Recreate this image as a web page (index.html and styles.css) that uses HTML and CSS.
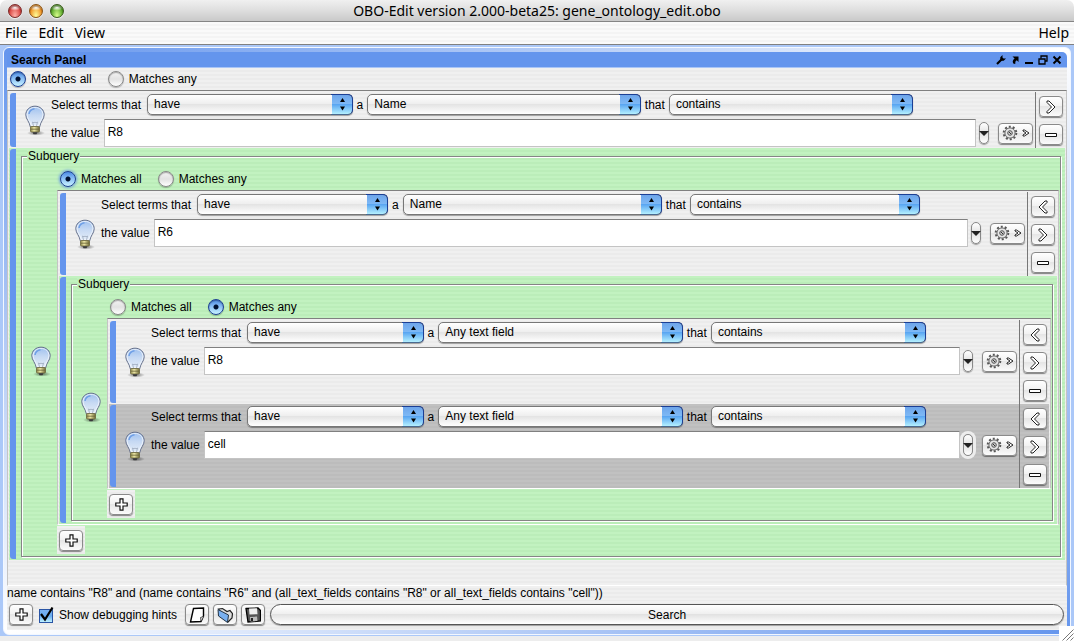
FILE: index.html
```html
<!DOCTYPE html>
<html lang="en">
<head>
<meta charset="utf-8">
<title>OBO-Edit version 2.000-beta25: gene_ontology_edit.obo</title>
<link rel="stylesheet" href="styles.css">
</head>
<body>
<svg class="defs" width="0" height="0" aria-hidden="true">
  <defs>
    <linearGradient id="glass" x1="0" y1="0" x2="0" y2="1"><stop offset="0" stop-color="#9dbfee"/><stop offset=".45" stop-color="#c6d9f3"/><stop offset="1" stop-color="#e6eef8"/></linearGradient>
    <linearGradient id="brass" x1="0" y1="0" x2="1" y2="0"><stop offset="0" stop-color="#8a8448"/><stop offset=".4" stop-color="#f0eaa8"/><stop offset="1" stop-color="#6d6836"/></linearGradient>
    <radialGradient id="shade"><stop offset="0" stop-color="#000" stop-opacity=".5"/><stop offset="1" stop-color="#000" stop-opacity="0"/></radialGradient>
  </defs>
  <symbol id="bulb" viewBox="0 0 20 31">
    <ellipse cx="11" cy="28" rx="9" ry="2.6" fill="url(#shade)"/>
    <path d="M10 1.2C4.6 1.2.8 5 .8 9.8c0 4.4 3.6 6.500 4.600 12.200h9.200c1-5.700 4.600-7.800 4.600-12.200C19.200 5 15.400 1.200 10 1.200z" fill="url(#glass)" stroke="#66708a"/>
    <path d="M10 2.400c-4.600 0-7.900 3.200-7.900 7.400 0 3.700 3 5.800 4.200 10.900h7.400c1.200-5.100 4.200-7.200 4.200-10.900 0-4.200-3.300-7.400-7.900-7.400z" fill="none" stroke="#f4f8fd" stroke-opacity=".8"/>
    <path d="M4 9c.5-3 2.500-4.800 5.500-5.200" fill="none" stroke="#6f9fe6" stroke-width="1.500"/>
    <path d="M8.500 21l-1-4 1.500.8 1-.8 1 .8 1.500-.8-1 4" fill="none" stroke="#93a0b4" stroke-width=".7"/>
    <rect x="5.500" y="21.500" width="9" height="5.500" rx="1" fill="url(#brass)" stroke="#6a6538" stroke-width=".8"/>
    <path d="M6 24.200h8" stroke="#6a6538" stroke-width=".8"/>
    <path d="M7.500 27.300h5l-1 2h-3z" fill="#3a3a3a"/>
  </symbol>
  <symbol id="gear" viewBox="0 0 16 16">
    <circle cx="8" cy="8" r="6.300" fill="none" stroke="#555" stroke-width="2" stroke-dasharray="2 1.958"/>
    <circle cx="8" cy="8" r="5.100" fill="#e6e6e6" stroke="#666"/>
    <circle cx="8" cy="8" r="2.300" fill="#ccc" stroke="#555"/>
    <path d="M7 7l2 2" stroke="#333"/>
  </symbol>
  <symbol id="chev-small" viewBox="0 0 8 8"><path d="M1 1h1.500L7 4 2.500 7H1V6l3-2-3-2z" fill="#fff" stroke="#222"/></symbol>
  <symbol id="chev-right" viewBox="0 0 12 14"><path d="M2 1h2l6 6-6 6H2v-1.500L6.500 7 2 2.500z" fill="#fff" stroke="#222"/></symbol>
  <symbol id="chev-left" viewBox="0 0 12 14"><path d="M10 1H8L2 7l6 6h2v-1.500L5.500 7 10 2.500z" fill="#fff" stroke="#222"/></symbol>
  <symbol id="minus" viewBox="0 0 12 14"><path d="M.5 5.500h11v3H.5z" fill="#fff" stroke="#111"/></symbol>
  <symbol id="plus" viewBox="0 0 13 13"><path d="M5 .8h3V5h4.200v3H8v4.200H5V8H.8V5H5z" fill="#fff" stroke="#111" stroke-width="1.200"/></symbol>
  <symbol id="updown" viewBox="0 0 7 15"><path d="M3.500 1L6 5H1zM3.500 13.500L6 9.500H1z" fill="#000"/></symbol>
</svg>

<header class="titlebar">
  <div class="lights">
    <button class="light red" aria-label="Close window"></button>
    <button class="light amber" aria-label="Minimize window"></button>
    <button class="light green" aria-label="Zoom window"></button>
  </div>
  <h1>OBO-Edit version 2.000-beta25: gene_ontology_edit.obo</h1>
</header>
<nav class="menubar">
  <button>File</button><button>Edit</button><button>View</button><button class="help">Help</button>
</nav>

<main class="desk">
  <section class="dock">
    <div class="dock-head">
      <h2>Search Panel</h2>
      <div class="dock-tools">
        <button aria-label="Settings"><svg width="10" height="10" viewBox="0 0 10 10"><path d="M1 9l5-5" stroke="#000" stroke-width="2.200"/><path d="M6.500 0L4.300 2.300v3.400h3.400L10 3.500H7.500L6.500 2.500z" fill="#000"/></svg></button>
        <button aria-label="Detach"><svg width="10" height="10" viewBox="0 0 10 10"><path d="M2.500 1.500h6V7L6.800 5.200C5.500 6 5 7 5.500 8.500L4 9C2 7.500 2.500 5 4.600 3.400z" fill="#000"/></svg></button>
        <button aria-label="Minimize"><svg width="10" height="10" viewBox="0 0 10 10"><path d="M1 8h8" stroke="#000" stroke-width="2"/></svg></button>
        <button aria-label="Restore"><svg width="10" height="10" viewBox="0 0 10 10"><path d="M3 3.500V1h6v5H7" fill="none" stroke="#000" stroke-width="1.300"/><path d="M1 4h6v5H1z" fill="none" stroke="#000" stroke-width="1.300"/></svg></button>
        <button aria-label="Close"><svg width="10" height="10" viewBox="0 0 10 10"><path d="M1.500 1.500l7 7M8.500 1.500l-7 7" stroke="#000" stroke-width="1.900"/></svg></button>
      </div>
    </div>

    <div class="radios">
      <label><input type="radio" name="match1" checked>Matches all</label>
      <label><input type="radio" name="match1">Matches any</label>
    </div>

    <div class="list root">
      <div class="row">
        <i class="bar"></i>
        <svg class="bulb"><use href="#bulb"/></svg>
        <div class="form">
          <div class="line">
            <span>Select terms that</span>
            <span class="pick have"><select aria-label="Verb"><option>have</option></select><svg><use href="#updown"/></svg></span>
            <span>a</span>
            <span class="pick field"><select aria-label="Field"><option>Name</option></select><svg><use href="#updown"/></svg></span>
            <span>that</span>
            <span class="pick test"><select aria-label="Comparison"><option>contains</option></select><svg><use href="#updown"/></svg></span>
            <span class="rest"></span>
          </div>
          <div class="line">
            <label for="v1">the value</label>
            <input class="value" id="v1" type="text" value="R8">
            <button class="drop" aria-label="Recent values"></button>
            <button class="btn gear" aria-label="Options"><svg class="g"><use href="#gear"/></svg><svg class="c"><use href="#chev-small"/></svg></button>
          </div>
        </div>
        <div class="moves">
          <button class="btn" aria-label="Indent"><svg><use href="#chev-right"/></svg></button>
          <button class="btn" aria-label="Remove"><svg><use href="#minus"/></svg></button>
        </div>
      </div>

      <div class="row sub">
        <i class="bar"></i>
        <fieldset>
          <legend>Subquery</legend>
          <div class="group">
          <svg class="bulb"><use href="#bulb"/></svg>
          <div class="query">
            <div class="radios">
              <label><input class="focus" type="radio" name="match2" checked>Matches all</label>
              <label><input type="radio" name="match2">Matches any</label>
            </div>
            <div class="list">
              <div class="row">
                <i class="bar"></i>
                <svg class="bulb"><use href="#bulb"/></svg>
                <div class="form">
                  <div class="line">
                    <span>Select terms that</span>
                    <span class="pick have"><select aria-label="Verb"><option>have</option></select><svg><use href="#updown"/></svg></span>
                    <span>a</span>
                    <span class="pick field"><select aria-label="Field"><option>Name</option></select><svg><use href="#updown"/></svg></span>
                    <span>that</span>
                    <span class="pick test"><select aria-label="Comparison"><option>contains</option></select><svg><use href="#updown"/></svg></span>
                    <span class="rest"></span>
                  </div>
                  <div class="line">
                    <label for="v2">the value</label>
                    <input class="value" id="v2" type="text" value="R6">
                    <button class="drop" aria-label="Recent values"></button>
                    <button class="btn gear" aria-label="Options"><svg class="g"><use href="#gear"/></svg><svg class="c"><use href="#chev-small"/></svg></button>
                  </div>
                </div>
                <div class="moves">
                  <button class="btn" aria-label="Outdent"><svg><use href="#chev-left"/></svg></button>
                  <button class="btn" aria-label="Indent"><svg><use href="#chev-right"/></svg></button>
                  <button class="btn" aria-label="Remove"><svg><use href="#minus"/></svg></button>
                </div>
              </div>

              <div class="row sub">
                <i class="bar"></i>
                <fieldset>
                  <legend>Subquery</legend>
                  <div class="group">
                  <svg class="bulb"><use href="#bulb"/></svg>
                  <div class="query">
                    <div class="radios">
                      <label><input type="radio" name="match3">Matches all</label>
                      <label><input type="radio" name="match3" checked>Matches any</label>
                    </div>
                    <div class="list">
                      <div class="row">
                        <i class="bar"></i>
                        <svg class="bulb"><use href="#bulb"/></svg>
                        <div class="form">
                          <div class="line">
                            <span>Select terms that</span>
                            <span class="pick have"><select aria-label="Verb"><option>have</option></select><svg><use href="#updown"/></svg></span>
                            <span>a</span>
                            <span class="pick field"><select aria-label="Field"><option>Any text field</option></select><svg><use href="#updown"/></svg></span>
                            <span>that</span>
                            <span class="pick test"><select aria-label="Comparison"><option>contains</option></select><svg><use href="#updown"/></svg></span>
                            <span class="rest"></span>
                          </div>
                          <div class="line">
                            <label for="v3">the value</label>
                            <input class="value" id="v3" type="text" value="R8">
                            <button class="drop" aria-label="Recent values"></button>
                            <button class="btn gear" aria-label="Options"><svg class="g"><use href="#gear"/></svg><svg class="c"><use href="#chev-small"/></svg></button>
                          </div>
                        </div>
                        <div class="moves">
                          <button class="btn" aria-label="Outdent"><svg><use href="#chev-left"/></svg></button>
                          <button class="btn" aria-label="Indent"><svg><use href="#chev-right"/></svg></button>
                          <button class="btn" aria-label="Remove"><svg><use href="#minus"/></svg></button>
                        </div>
                      </div>
                      <div class="row selected">
                        <i class="bar"></i>
                        <svg class="bulb"><use href="#bulb"/></svg>
                        <div class="form">
                          <div class="line">
                            <span>Select terms that</span>
                            <span class="pick have"><select aria-label="Verb"><option>have</option></select><svg><use href="#updown"/></svg></span>
                            <span>a</span>
                            <span class="pick field"><select aria-label="Field"><option>Any text field</option></select><svg><use href="#updown"/></svg></span>
                            <span>that</span>
                            <span class="pick test"><select aria-label="Comparison"><option>contains</option></select><svg><use href="#updown"/></svg></span>
                            <span class="rest"></span>
                          </div>
                          <div class="line">
                            <label for="v4">the value</label>
                            <input class="value" id="v4" type="text" value="cell">
                            <button class="drop" aria-label="Recent values"></button>
                            <button class="btn gear" aria-label="Options"><svg class="g"><use href="#gear"/></svg><svg class="c"><use href="#chev-small"/></svg></button>
                          </div>
                        </div>
                        <div class="moves">
                          <button class="btn" aria-label="Outdent"><svg><use href="#chev-left"/></svg></button>
                          <button class="btn" aria-label="Indent"><svg><use href="#chev-right"/></svg></button>
                          <button class="btn" aria-label="Remove"><svg><use href="#minus"/></svg></button>
                        </div>
                      </div>
                    </div>
                    <div class="adder"><button class="btn add" aria-label="Add term"><svg><use href="#plus"/></svg></button></div>
                  </div>
                  </div>
                </fieldset>
              </div>
            </div>
            <div class="adder"><button class="btn add" aria-label="Add term"><svg><use href="#plus"/></svg></button></div>
          </div>
          </div>
        </fieldset>
      </div>
    </div>

    <p class="summary">name contains "R8" and (name contains "R6" and (all_text_fields contains "R8" or all_text_fields contains "cell"))</p>
    <div class="toolbar">
      <button class="btn add" aria-label="Add term"><svg><use href="#plus"/></svg></button>
      <label class="hints"><span class="check"><input type="checkbox" checked><svg viewBox="0 0 18 18"><path d="M4 8l4 5.500L15.500 1.500" fill="none" stroke="#000" stroke-width="2.200"/></svg></span>Show debugging hints</label>
      <button class="btn" aria-label="New"><svg class="pic" viewBox="0 0 16 16"><path d="M4.500 1.500l10-.5v8l-2.500 5.500-10.500.5z" fill="#fff" stroke="#000" stroke-width="1.400"/><path d="M12 14l-.5-3.500 3-1" fill="#ddd" stroke="#333" stroke-width=".8"/></svg></button>
      <button class="btn" aria-label="Open"><svg class="pic" viewBox="0 0 16 16"><path d="M1.500 2l4-.5 4.500 3 3-1 2.500 3L15 11l-4 4z" fill="#ddd" stroke="#222" stroke-width="1.200"/><path d="M1 2.500L11.500 8l-1 7.500L1.500 9z" fill="#79b0f0" stroke="#234" stroke-width="1"/></svg></button>
      <button class="btn" aria-label="Save"><svg class="pic" viewBox="0 0 16 16"><path d="M1 1.500l12-.5 2.500 2.500V14L3 15z" fill="#555" stroke="#000" stroke-width="1.300"/><path d="M4 1.500l8-.3.500 6-8 .3z" fill="#eee"/><path d="M5 10l7-.4.500 4.500-7 .4z" fill="#bbb"/><path d="M6 11h2v3H6z" fill="#222"/></svg></button>
      <button class="search">Search</button>
    </div>
  </section>
</main>
<footer class="foot"></footer>
<svg class="grip" viewBox="0 0 15 15" aria-hidden="true"><path d="M3.500 14.500l11-11M7.500 14.500l7-7M11.500 14.500l3-3" stroke="#777"/></svg>
</body>
</html>
```
FILE: styles.css
```css
* { box-sizing: border-box; }

body {
  margin: 0;
  min-height: 100vh;
  display: flex;
  flex-direction: column;
  background: #fff;
  color: #000;
  font: 12px/16px "Liberation Sans", Arial, sans-serif;
}

button, input, select { font: inherit; color: inherit; margin: 0; }
button { padding: 0; border: 0; background: none; }
h1, h2, p { margin: 0; }
svg { display: block; }
.defs { position: absolute; }

/* window chrome */
.titlebar {
  position: relative;
  display: flex;
  align-items: center;
  justify-content: center;
  height: 22px;
  border-bottom: 1px solid #858585;
  border-radius: 7px 7px 0 0;
  background: linear-gradient(#f0f0f0, #dedede 50%, #c9c9c9);
}
.titlebar h1 { font: 14px/20px "Noto Sans", "Open Sans", sans-serif; }
.lights { position: absolute; left: 8px; top: 4px; display: flex; gap: 7px; }
.light {
  width: 14px;
  height: 14px;
  border: 1px solid #444;
  border-radius: 50%;
  box-shadow: inset 0 2px 1px rgba(0,0,0,.25), 0 1px 1px rgba(255,255,255,.7);
}
.red { border-color: #7a2a28; background: radial-gradient(6px 3px at 50% 22%, #fff, transparent), radial-gradient(at 50% 90%, #ffb0a8, #d8433f 70%); }
.amber { border-color: #8a5312; background: radial-gradient(6px 3px at 50% 22%, #fff, transparent), radial-gradient(at 50% 90%, #ffff9a, #ef9023 70%); }
.green { border-color: #3a5a1a; background: radial-gradient(6px 3px at 50% 22%, #fff, transparent), radial-gradient(at 50% 90%, #d9ff8c, #55a428 70%); }

.menubar {
  display: flex;
  align-items: center;
  gap: 11px;
  height: 23px;
  padding: 0 5px;
  border-bottom: 1px solid #808080;
  background: repeating-linear-gradient(#fafafa 0 2px, #f4f4f4 2px 4px);
}
.menubar button { font: 14px/20px "Noto Sans", "Open Sans", sans-serif; }
.menubar .help { margin-left: auto; }

/* dock panel */
.desk {
  flex: 1;
  display: flex;
  padding: 2px 3px 1px;
  background: #abc8f8;
}
.dock {
  flex: 1;
  min-width: 0;
  display: flex;
  flex-direction: column;
  padding: 4px 3px;
  border: 1px solid #f2f7ff;
  border-radius: 6px;
  background: linear-gradient(to bottom right, #6495ed, #fff 50%, #6495ed);
}
.dock-head {
  display: flex;
  align-items: center;
  justify-content: space-between;
  height: 16px;
  padding: 0 5px 0 4px;
  border-bottom: 1px solid #a9c5f6;
  border-radius: 5px 5px 0 0;
  background: #6495ed;
}
.dock-head h2 { font-size: 12px; line-height: 16px; }
.dock-tools { display: flex; gap: 4px; }

.dock > .radios, .root, .summary, .toolbar, .list, .adder {
  background: repeating-linear-gradient(#f0f0f0 0 2px, #ebebeb 2px 4px);
}

.radios {
  display: flex;
  align-items: center;
  gap: 16px;
  height: 22px;
  padding-left: 3px;
}
.radios label { display: flex; align-items: center; gap: 5px; }
.radios input {
  appearance: none;
  width: 16px;
  height: 16px;
  border: 1px solid #888;
  border-radius: 50%;
  background: linear-gradient(#f4f4f4, #e2e2e2 50%, #fff);
  box-shadow: inset 0 1px 1px rgba(0,0,0,.3), 0 1px 1px rgba(0,0,0,.25);
}
.radios input:checked {
  border-color: #1c3f94;
  background:
    radial-gradient(circle, #001030 2px, transparent 3px),
    linear-gradient(#4d8be4, #8fc3f7 50%, #c8f2ff);
}
.radios .focus { box-shadow: 0 0 3px 1px #6f9fe0; }

.list {
  padding: 1px 1px 0 1px;
  border: 1px solid #c4c4c4;
  border-top-color: #808080;
  border-bottom-color: #fff;
}
.root { flex: 1; }
.row { display: flex; padding-left: 1px; }
.bar {
  flex: none;
  width: 6px;
  margin: 1px 0;
  border-radius: 3px 0 0 3px;
  background: #6495ed;
}
.bulb { flex: none; align-self: center; width: 20px; height: 31px; margin: 0 6px 0 9px; }
.selected { background: repeating-linear-gradient(#c1c1c1 0 2px, #bcbcbc 2px 4px); }

.form { flex: 1; min-width: 0; padding-right: 2px; }
.line { display: flex; align-items: center; gap: 4px; height: 28px; white-space: nowrap; }
.line:first-child { height: 25px; margin-bottom: 2px; }
.line > span:first-child { margin-right: 2px; }

.pick { position: relative; flex-grow: 1; flex-shrink: 1; min-width: 0; }
.have { flex-basis: 100px; }
.field { flex-basis: 168px; }
.test { flex-basis: 139px; }
.rest { flex: 1 1 10px; }
.pick select {
  appearance: none;
  display: block;
  width: 100%;
  height: 21px;
  padding: 0 24px 2px 6px;
  border: 1px solid #777;
  border-radius: 5px;
  background:
    linear-gradient(#6ea5ea, #7db8f5 45%, #5aa6f2 50%, #b4f0ff) right / 20px 100% no-repeat,
    linear-gradient(#fff, #efefef 45%, #e4e4e4 50%, #fff);
  box-shadow: 0 1px 1px rgba(0,0,0,.35);
}
.pick::after {
  content: "";
  position: absolute;
  inset: 0 0 0 auto;
  width: 21px;
  border: 1px solid #1c3f94;
  border-left: 0;
  border-bottom-color: #4a6a90;
  border-radius: 0 5px 5px 0;
  pointer-events: none;
}
.pick svg { position: absolute; right: 7px; top: 3px; width: 7px; height: 15px; pointer-events: none; }

.value {
  flex: 1;
  min-width: 0;
  height: 28px;
  padding: 0 3px 2px;
  border: 1px solid #c4c4c4;
  border-top: 1px solid #808080;
  border-radius: 0;
  background: #fff;
}
.drop {
  flex: none;
  position: relative;
  width: 10px;
  height: 22px;
  margin-right: 5px;
  border: 1px solid #888;
  border-radius: 5px;
  background: linear-gradient(#fff, #e2e2e2 50%, #fff);
  box-shadow: 0 1px 1px rgba(0,0,0,.35);
}
.line .drop { margin-left: -1px; }
.drop::after {
  content: "";
  position: absolute;
  left: -1px;
  top: 8px;
  border: 5px solid transparent;
  border-top-color: #222;
  border-bottom: 0;
}
.selected .drop { box-shadow: 0 0 0 3px #ededed; }

.btn {
  flex: none;
  display: flex;
  align-items: center;
  justify-content: center;
  width: 24px;
  height: 21px;
  border: 1px solid #8a8a8a;
  border-radius: 4px;
  background: linear-gradient(#fff, #f2f2f2 45%, #e6e6e6 50%, #fbfbfb);
  box-shadow: 0 1px 1px rgba(0,0,0,.45);
}
.btn svg { width: 12px; height: 14px; }
.add svg { width: 13px; height: 13px; }
.gear { width: 35px; gap: 4px; }
.gear .g { width: 16px; height: 16px; }
.gear .c { width: 8px; height: 8px; }

.moves {
  flex: none;
  display: flex;
  flex-direction: column;
  gap: 7px;
  padding: 4px 2px 3px 3px;
  border-left: 1px solid #777;
}

/* nested queries */
.sub, .sub legend { background: repeating-linear-gradient(#c2f2c0 0 2px, #bbedb9 2px 4px); }
.sub > fieldset {
  flex: 1;
  min-width: 0;
  margin: 1px 4px 3px 5px;
  padding: 5px 1px 2px 1px;
  border: 1px solid #858585;
  box-shadow: 1px 1px #fff, inset 1px 1px #fff;
}
.sub legend { margin-left: 4px; padding: 0 1px; line-height: 14px; }
.group { display: flex; }
.group > .bulb { margin: 0 6px 0 8px; }
.query { flex: 1; min-width: 0; }
.adder { width: 28px; height: 28px; margin-top: 1px; padding: 4px 2px; }

/* bottom controls */
.summary { line-height: 15px; white-space: nowrap; }
.toolbar { display: flex; align-items: center; gap: 4px; height: 29px; padding: 1px 3px 3px 2px; }
.hints { display: flex; align-items: center; gap: 4px; margin-right: 4px; white-space: nowrap; }
.check { position: relative; width: 18px; height: 18px; }
.check input {
  appearance: none;
  display: block;
  width: 14px;
  height: 14px;
  margin: 3px 1px 1px 2px;
  border: 1px solid #2a55a5;
  background: linear-gradient(#79b1f2, #68acf0 50%, #bff2ff);
}
.check svg { position: absolute; inset: 0; width: 18px; height: 18px; pointer-events: none; }
.btn .pic { width: 16px; height: 16px; }
.search {
  flex: 1;
  height: 21px;
  margin-left: 1px;
  border: 1px solid #555;
  border-radius: 11px;
  background: linear-gradient(#fff, #f0f0f0 45%, #e2e2e2 50%, #fff);
  box-shadow: 0 1px 1px rgba(0,0,0,.35);
}

.foot { height: 5px; background: #ededed; }
.grip { position: absolute; right: 0; bottom: 0; width: 15px; height: 15px; background: #fff; }
```
